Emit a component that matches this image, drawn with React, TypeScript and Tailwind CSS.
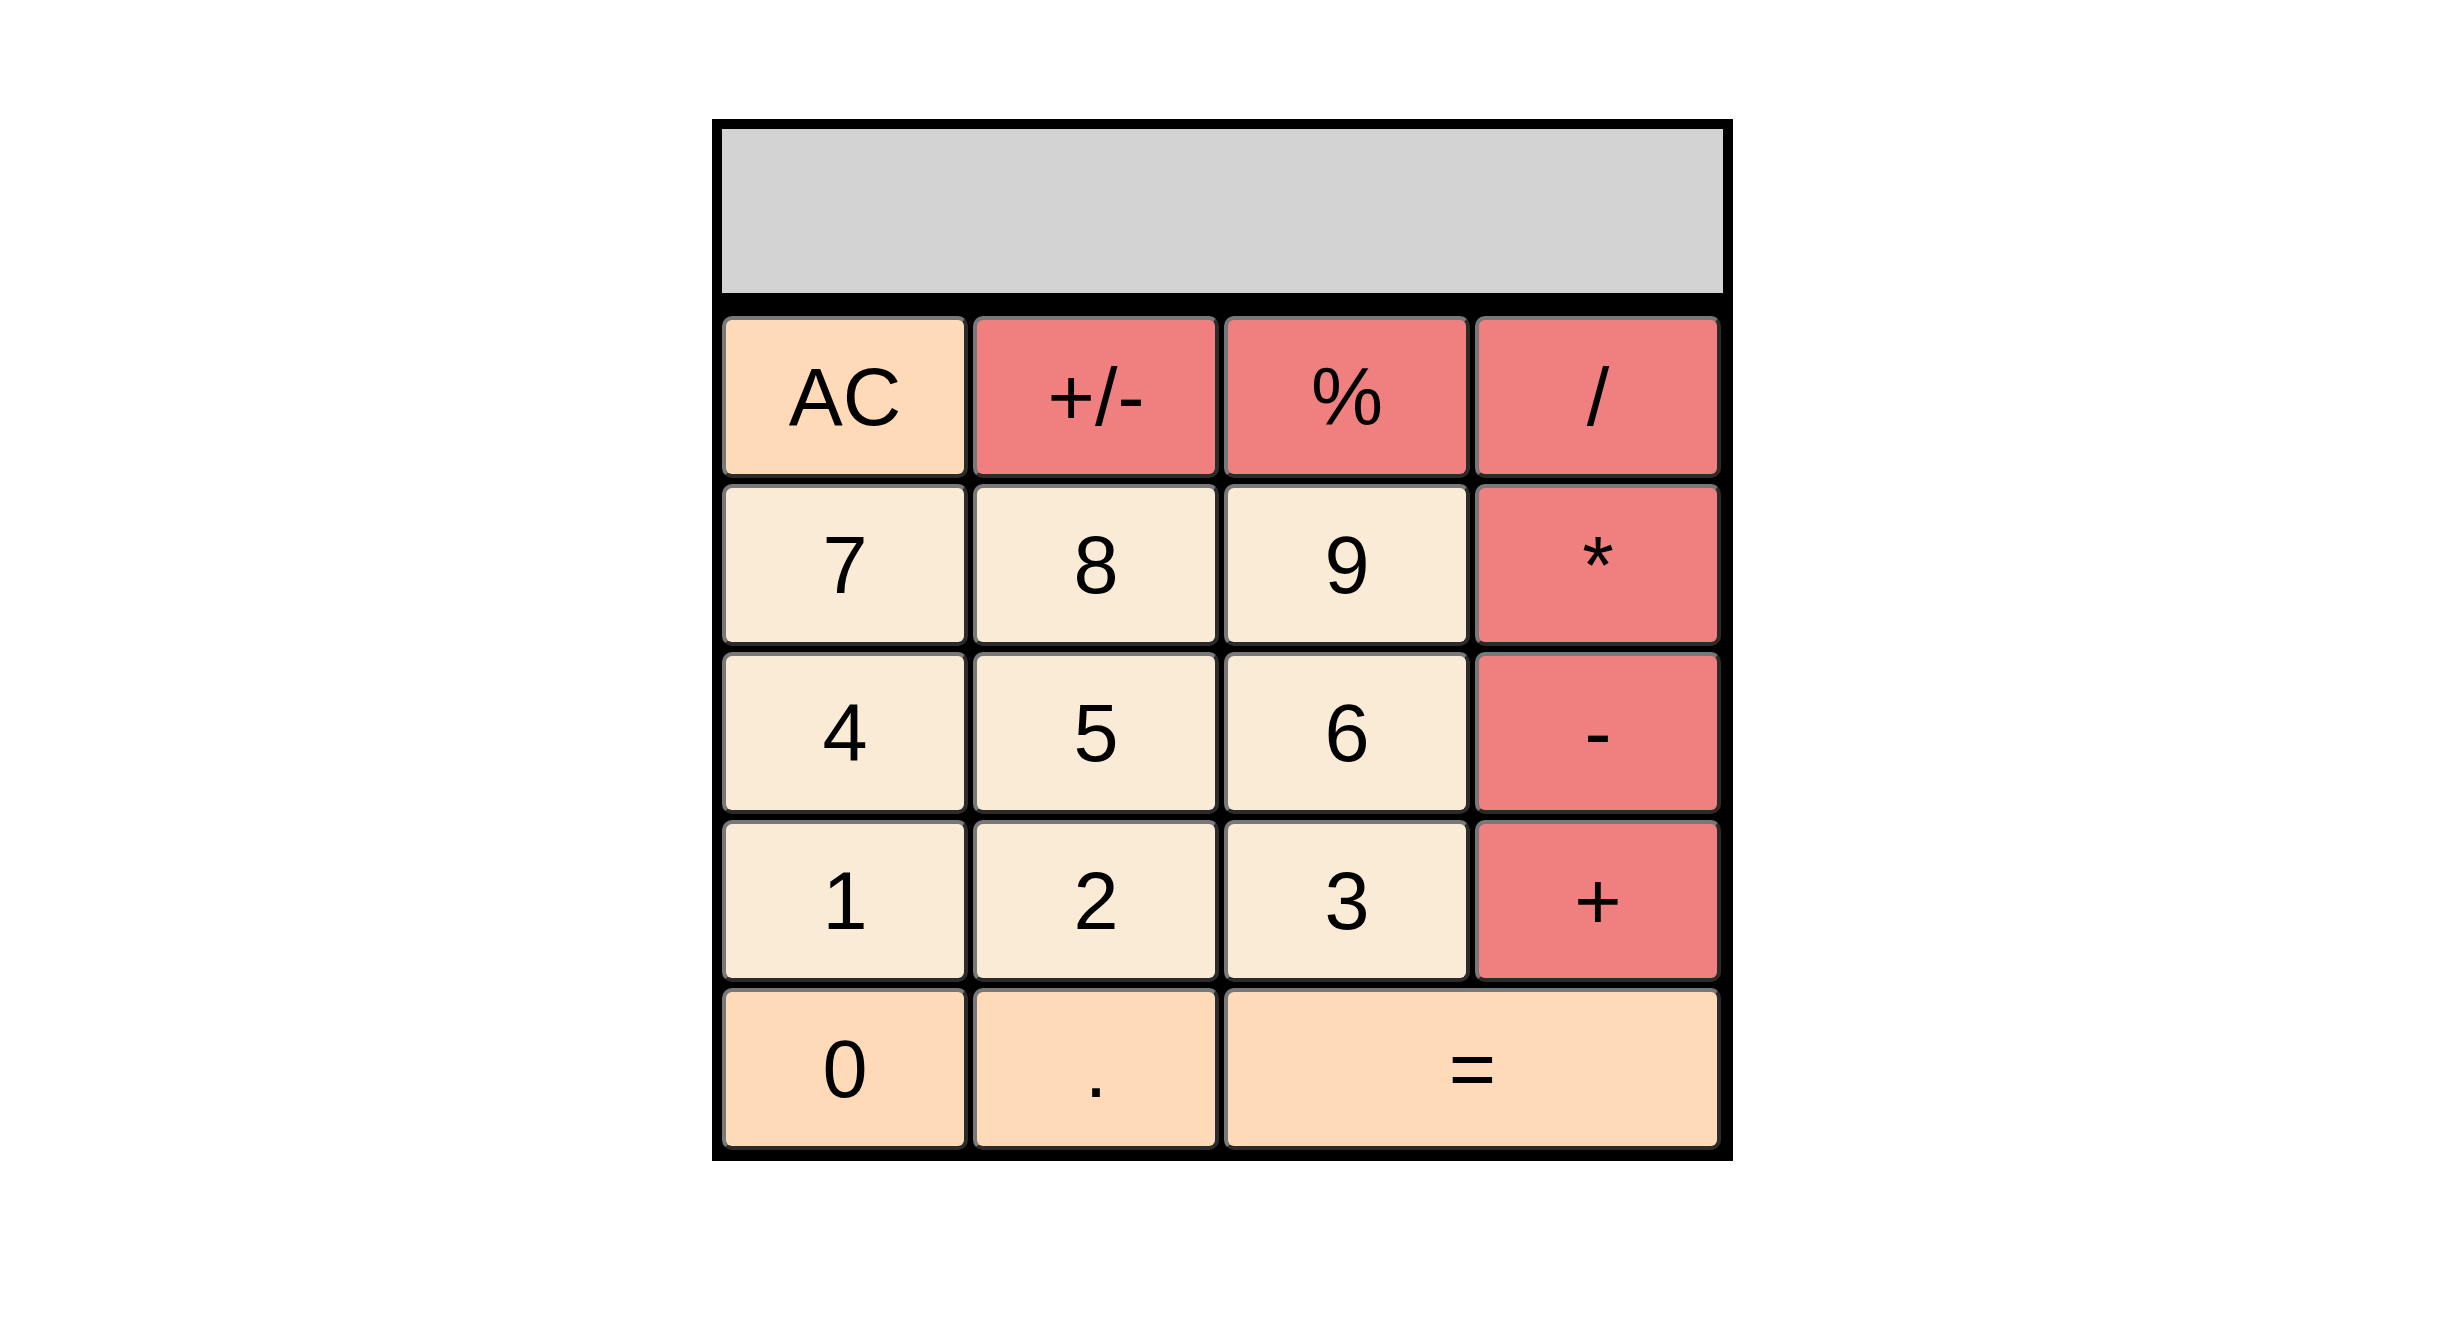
const keys: { label: string; tone: 'peach' | 'red' | 'cream'; wide?: boolean }[] = [
  { label: 'AC', tone: 'peach' },
  { label: '+/-', tone: 'red' },
  { label: '%', tone: 'red' },
  { label: '/', tone: 'red' },
  { label: '7', tone: 'cream' },
  { label: '8', tone: 'cream' },
  { label: '9', tone: 'cream' },
  { label: '*', tone: 'red' },
  { label: '4', tone: 'cream' },
  { label: '5', tone: 'cream' },
  { label: '6', tone: 'cream' },
  { label: '-', tone: 'red' },
  { label: '1', tone: 'cream' },
  { label: '2', tone: 'cream' },
  { label: '3', tone: 'cream' },
  { label: '+', tone: 'red' },
  { label: '0', tone: 'peach' },
  { label: '.', tone: 'peach' },
  { label: '=', tone: 'peach', wide: true },
];

const toneClass = {
  peach: 'bg-[#ffdab9]',
  red: 'bg-[#f08080]',
  cream: 'bg-[#faebd7]',
};

export default function App() {
  return (
    <div className="min-h-screen bg-white pt-[119px] pl-[712px] font-['Liberation_Sans',Arial,sans-serif]">
      <div className="w-[1021px] border-[10px] border-black bg-black pb-px pr-[2px]">
        {/* Display */}
        <div className="h-[164px] w-[1001px] bg-[#d3d3d3] mb-[23px]" />

        {/* Keypad */}
        <div className="grid grid-cols-[repeat(4,246px)] auto-rows-[162px] gap-x-[5px] gap-y-[6px]">
          {keys.map((key) => (
            <button
              key={key.label}
              className={`${toneClass[key.tone]} ${key.wide ? 'col-span-2' : ''} flex items-center justify-center rounded-[10px] border-4 border-t-[#787878] border-l-[#787878] border-b-[#2b2b2b] border-r-[#2b2b2b] text-[81px] leading-none text-black`}
            >
              {key.label}
            </button>
          ))}
        </div>
      </div>
    </div>
  );
}
